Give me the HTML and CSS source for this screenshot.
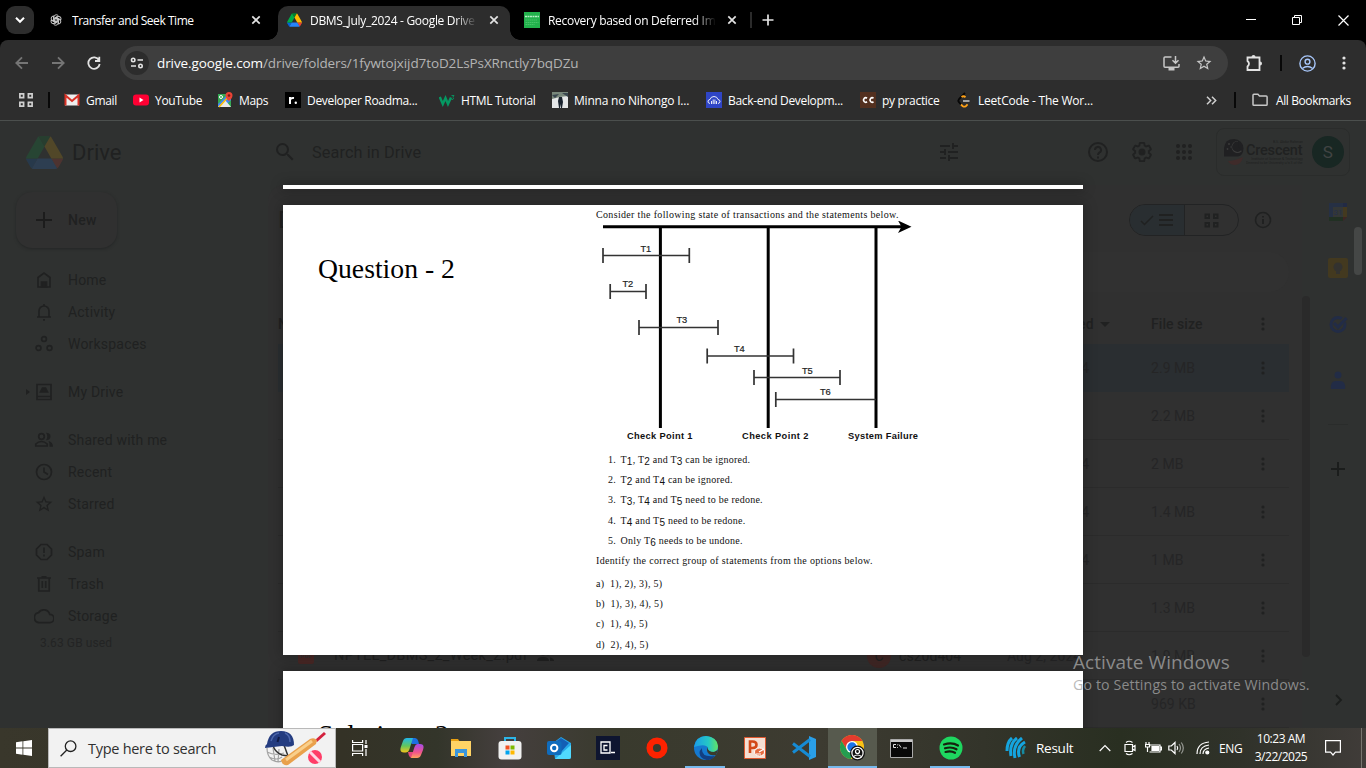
FILE: index.html
```html
<!DOCTYPE html>
<html lang="en">
<head>
<meta charset="utf-8">
<title>DBMS_July_2024 - Google Drive</title>
<link rel="stylesheet" href="styles.css">
</head>
<body>
<svg class="defs" width="0" height="0">
  <symbol id="drive" viewBox="0 0 87.3 78"><path fill="#0066da" d="m6.6 66.85 3.85 6.65c.8 1.4 1.95 2.5 3.3 3.3l13.75-23.8h-27.5c0 1.55.4 3.1 1.2 4.5z"/><path fill="#00ac47" d="m43.65 25-13.75-23.8c-1.35.8-2.5 1.9-3.3 3.3l-25.4 44a9.06 9.06 0 0 0 -1.2 4.5h27.5z"/><path fill="#ea4335" d="m73.55 76.8c1.35-.8 2.5-1.9 3.3-3.3l1.6-2.75 7.65-13.25c.8-1.4 1.2-2.95 1.2-4.5h-27.5l5.85 11.5z"/><path fill="#00832d" d="m43.65 25 13.75-23.8c-1.35-.8-2.9-1.2-4.5-1.2h-18.5c-1.6 0-3.15.45-4.5 1.2z"/><path fill="#2684fc" d="m59.8 53h-32.3l-13.75 23.8c1.35.8 2.9 1.2 4.5 1.2h50.8c1.6 0 3.15-.45 4.5-1.2z"/><path fill="#ffba00" d="m73.4 26.5-12.7-22c-.8-1.4-1.95-2.5-3.3-3.3l-13.75 23.8 16.15 28h27.45c0-1.55-.4-3.1-1.2-4.5z"/></symbol>
  <symbol id="x" viewBox="0 0 10 10"><path d="M1.3 1.3l7.4 7.4M8.7 1.3L1.3 8.7" fill="none" stroke="#e3e3e3" stroke-width="1.7"/></symbol>
  <symbol id="star" viewBox="0 0 24 24"><path d="M22 9.24l-7.19-.62L12 2 9.19 8.63 2 9.24l5.46 4.73L5.82 21 12 17.27 18.18 21l-1.63-7.03L22 9.24zM12 15.4l-3.76 2.27 1-4.28-3.32-2.88 4.38-.38L12 6.1l1.71 4.04 4.38.38-3.32 2.88 1 4.28L12 15.4z"/></symbol>
  <symbol id="dots" viewBox="0 0 4 16"><circle cx="2" cy="3" r="1.6"/><circle cx="2" cy="8" r="1.6"/><circle cx="2" cy="13" r="1.6"/></symbol>
</svg>

<header class="tabs">
  <div class="tabsearch"><svg width="10" height="8" viewBox="0 0 10 8" fill="none" stroke="#fff" stroke-width="2"><path d="M1 1.8l4 4 4-4"/></svg></div>
  <div class="tab t1">
    <svg width="12" height="12" viewBox="0 0 24 24" fill="none" stroke="#c8c8c8" stroke-width="1.900"><g id="petal"><path d="M8 13V5.500Q8.500 1.500 12.500 1.500q2.500 0 4 2L9.500 7.800V14"/></g><use href="#petal" transform="rotate(60 12 12)"/><use href="#petal" transform="rotate(120 12 12)"/><use href="#petal" transform="rotate(180 12 12)"/><use href="#petal" transform="rotate(240 12 12)"/><use href="#petal" transform="rotate(300 12 12)"/></svg>
    <span>Transfer and Seek Time</span><svg class="close" width="10" height="10"><use href="#x"/></svg>
  </div>
  <div class="tab t2">
    <svg width="15" height="14"><use href="#drive"/></svg>
    <span class="fade">DBMS_July_2024 - Google Drive</span><svg class="close" width="10" height="10"><use href="#x"/></svg>
  </div>
  <div class="tab t3">
    <svg width="16" height="16" viewBox="0 0 16 16"><path fill="#22b14c" d="M0 0h16v16H0z"/><path stroke="#b5f0c4" stroke-width="1.400" stroke-dasharray="2 .5" d="M1 4.500h14"/><path stroke="#58cb77" stroke-width=".7" stroke-dasharray="1.500 .5" d="M1.500 8h12M1.500 10.500h13M1.500 12.500h9"/></svg>
    <span class="fade">Recovery based on Deferred Imm</span><svg class="close" width="10" height="10"><use href="#x"/></svg>
  </div>
  <i class="tabdiv"></i>
  <svg class="newtab" width="12" height="12" viewBox="0 0 12 12" stroke="#e3e3e3" stroke-width="1.7"><path d="M6 .5v11M.5 6h11"/></svg>
  <div class="winctl">
    <svg width="10" height="10" viewBox="0 0 10 10" stroke="#fff" fill="none"><path d="M0 4.500h10"/></svg>
    <svg width="10" height="10" viewBox="0 0 10 10" stroke="#fff" fill="none"><path d="M.5 2.500h7v7h-7zM2.500 2.500v-2h7v7h-2"/></svg>
    <svg width="11" height="11" viewBox="0 0 11 11" stroke="#fff" fill="none" stroke-width="1.2"><path d="M.5 .5l10 10M10.500 .5l-10 10"/></svg>
  </div>
</header>

<div class="toolbar">
  <svg class="nav dim" width="14" height="14" viewBox="0 0 14 14"><path d="M13 7H1.500M7 1.300L1.300 7 7 12.700"/></svg>
  <svg class="nav dim" width="14" height="14" viewBox="0 0 14 14"><path d="M1 7h11.500M7 1.300L12.700 7 7 12.700"/></svg>
  <svg class="nav" width="14" height="14" viewBox="0 0 14 14"><path d="M12 4.200A5.700 5.700 0 1 0 12.700 8M12.300 .8v4.200H8"/></svg>
  <div class="omni">
    <div class="site"><svg width="14" height="12" viewBox="0 0 14 12" fill="none" stroke="#e3e3e3" stroke-width="1.600"><circle cx="3.200" cy="3" r="1.700"/><path d="M7.500 3H13M1 9h5"/><circle cx="10.500" cy="9" r="1.700"/></svg></div>
    <p class="url"><b>drive.google.com</b>/drive/folders/1fywtojxijd7toD2LsPsXRnctly7bqDZu</p>
    <svg class="inst" width="17" height="15" viewBox="0 0 17 15" fill="none" stroke="#c7c7c7" stroke-width="1.500"><path d="M8.500 1H2a1 1 0 0 0-1 1v8.200a1 1 0 0 0 1 1h13a1 1 0 0 0 1-1V8M12.500 0v7M9.500 4.300l3 3 3-3"/><path d="M5.500 13h6" stroke-width="3"/></svg>
    <svg width="18" height="18" fill="#c7c7c7"><use href="#star"/></svg>
  </div>
  <svg class="ext" width="17" height="17" viewBox="0 0 17 17" fill="none" stroke="#e3e3e3" stroke-width="1.800"><path d="M1.500 2.500h12v12.500h-12V11.500q3-3 0-5.500z"/><path fill="#e3e3e3" stroke="none" d="M5.500 2a2 2 0 0 1 4 0M14 6.500a2 2 0 0 1 0 4"/></svg>
  <i class="vd"></i>
  <svg class="prof" width="17" height="17" viewBox="0 0 17 17" fill="none" stroke="#a8c7fa" stroke-width="1.400"><circle cx="8.500" cy="8.500" r="7.600"/><circle cx="8.500" cy="6.700" r="2.400"/><path d="M3.300 13.500q5.200-4 10.400 0"/></svg>
  <svg class="more" width="4" height="16" fill="#e3e3e3"><use href="#dots"/></svg>
</div>

<nav class="bookmarks">
  <svg class="apps" width="14" height="14" viewBox="0 0 14 14" fill="none" stroke="#d0d0d0" stroke-width="1.700"><path d="M.9 .9h3.700v3.700H.9zM9.400 .9h3.700v3.700H9.400zM.9 9.400h3.700v3.700H.9zM9.400 9.400h3.700v3.700H9.400z"/></svg>
  <i class="vd"></i>
  <div class="marks">
    <a><svg width="16" height="16" viewBox="0 0 16 16"><path fill="#eee" d="M1 2.500h14v11H1z"/><path fill="none" stroke="#d93025" stroke-width="2" d="M1.500 13.500V3.500L8 9l6.500-5.500v10"/></svg>Gmail</a>
    <a><svg width="16" height="16" viewBox="0 0 16 16"><rect y="2.500" width="16" height="11" rx="3" fill="#ff0033"/><path fill="#fff" d="M6.500 5.500v5l4-2.500z"/></svg>YouTube</a>
    <a><svg width="16" height="16" viewBox="0 0 16 16"><path fill="#34a853" d="M1 2h13v13H1z"/><path fill="#4285f4" d="M1 12L10 3l4 0v5l-7 7H1z"/><path fill="#e8e8e8" d="M1 15l7-7 6 7H1z"/><path stroke="#fbbc04" stroke-width="1.600" d="M2 15L13 3"/><path fill="#ea4335" d="M12 0a3.500 3.500 0 0 1 3.500 3.500Q15.500 6 12 9 8.500 6 8.500 3.500A3.500 3.500 0 0 1 12 0z"/><circle cx="12" cy="3.500" r="1.300" fill="#7c1a12"/><circle cx="4" cy="5" r="1.500" fill="none" stroke="#fff"/></svg>Maps</a>
    <a><svg width="16" height="16" viewBox="0 0 16 16"><path d="M0 0h16v16H0z"/><path fill="none" stroke="#fff" stroke-width="2" d="M5 12V5M5 8q.5-2.500 4-2"/><circle cx="10.800" cy="10.800" r="1.200" fill="#fff"/></svg>Developer Roadma...</a>
    <a><svg width="16" height="16" viewBox="0 0 16 16" fill="none" stroke="#059862"><path stroke-width="2.400" d="M.8 5l3 7 2.700-6 2.500 6L12 5.500"/><path d="M12.500 3.500h2.500l-1.200 1.800q1.700.5 0 2.200h-1.300" stroke-width=".9"/></svg>HTML Tutorial</a>
    <a><svg width="16" height="16" viewBox="0 0 16 16"><path fill="#e5e7e8" d="M0 0h16v16H0z"/><path fill="#78877b" d="M0 0h16v4L8 5 0 7z"/><path fill="#39464f" d="M0 3l7-1-4 4zM10 1h6v4z"/><path fill="#18222d" d="M7 5h3l1 5-1 6H9l-.5-4L8 16H7L6 9z"/></svg>Minna no Nihongo I...</a>
    <a><svg width="16" height="16" viewBox="0 0 16 16"><path fill="#2f45c5" d="M0 0h16v16H0z"/><path fill="none" stroke="#fff" stroke-width=".9" d="M4 11.500q-2.500-.5-2-2.500.5-1.500 2-1.500.8-3 4-3t4 3q2.200.3 2 2.200-.2 1.500-2 1.800M5.500 12V9M7.200 12V7.500M8.900 12V7.500M10.500 12V9"/></svg>Back-end Developm...</a>
    <a><svg width="16" height="16" viewBox="0 0 16 16"><path fill="#53301f" d="M0 0h16v16H0z"/><path fill="none" stroke="#fff" stroke-width="1.700" d="M7 6.200A2.200 2.200 0 1 0 7 9.800M13.500 6.200a2.200 2.200 0 1 0 0 3.600"/></svg>py practice</a>
    <a><svg width="16" height="16" viewBox="0 0 16 16" fill="none" stroke-width="1.800"><path stroke="#070707" d="M9 1L3 7.200q-1.300 1.500 0 3L5 12.500"/><path stroke="#ffa116" d="M5.500 5q2-1.500 4 .2M5 12.500l1.800 1.700q1.500 1 3 0l1.800-1.800"/><path stroke="#b3b3b3" d="M7 9h6.500"/></svg>LeetCode - The Wor...</a>
  </div>
  <svg class="chev" width="11" height="9" viewBox="0 0 11 9" fill="none" stroke="#d0d0d0" stroke-width="1.500"><path d="M1 .8L4.700 4.500 1 8.200M6 .8l3.700 3.700L6 8.200"/></svg>
  <i class="vd"></i>
  <svg class="folder" width="16" height="14" viewBox="0 0 16 14" fill="none" stroke="#c7c7c7" stroke-width="1.500"><path d="M1 11.500V2.200q0-.9.900-.9h4l1.600 1.800h6.700q.9 0 .9.900v7.500q0 .8-.9.800H1.900q-.9 0-.9-.8z"/></svg>
  <span class="allb">All Bookmarks</span>
</nav>

<main class="page">
  <div class="apphead">
    <svg class="logo" width="37" height="33"><use href="#drive"/></svg><span class="brand">Drive</span>
    <div class="search">
      <svg width="24" height="24" viewBox="0 0 24 24"><path d="M15.5 14h-.79l-.28-.27A6.471 6.471 0 0 0 16 9.500 6.500 6.500 0 1 0 9.500 16c1.610 0 3.090-.59 4.230-1.570l.27.28v.79l5 4.990L20.490 19l-4.990-5zm-6 0C7.010 14 5 11.990 5 9.500S7.010 5 9.500 5 14 7.010 14 9.500 11.990 14 9.500 14z"/></svg>
      <span>Search in Drive</span>
      <svg width="24" height="24" viewBox="0 0 24 24"><path d="M3 17v2h6v-2H3zM3 5v2h10V5H3zm10 16v-2h8v-2h-8v-2h-2v6h2zM7 9v2H3v2h4v2h2V9H7zm14 4v-2H11v2h10zm-6-4h2V7h4V5h-4V3h-2v6z"/></svg>
    </div>
    <div class="headicons">
      <svg width="24" height="24" viewBox="0 0 24 24" class="ln"><circle cx="12" cy="12" r="9"/><path d="M9 10a3 3 0 1 1 4.500 2.500Q12 13.300 12 15M12 16.500v2"/></svg>
      <svg width="24" height="24" viewBox="0 0 24 24" class="ln"><path d="M19.430 12.980c.04-.32.07-.64.07-.98 0-.34-.03-.66-.07-.98l2.110-1.650c.19-.15.24-.42.12-.64l-2-3.460a.5.5 0 0 0-.61-.22l-2.490 1c-.52-.4-1.080-.73-1.690-.98l-.38-2.650A.49.49 0 0 0 14 2h-4c-.25 0-.46.18-.49.42l-.38 2.650c-.61.25-1.170.59-1.690.98l-2.490-1a.5.5 0 0 0-.61.22l-2 3.460c-.13.22-.07.49.12.64l2.110 1.650c-.04.32-.07.65-.07.98 0 .33.03.66.07.98l-2.110 1.650c-.19.15-.24.42-.12.64l2 3.460c.12.22.39.3.61.22l2.490-1c.52.4 1.080.73 1.690.98l.38 2.650c.03.24.24.42.49.42h4c.25 0 .46-.18.49-.42l.38-2.650c.61-.25 1.170-.59 1.690-.98l2.490 1c.23.09.49 0 .61-.22l2-3.460c.12-.22.07-.49-.12-.64z" transform="translate(1 1) scale(.917)"/><circle cx="12" cy="12" r="2.500" fill="#202121"/></svg>
      <svg width="24" height="24" viewBox="0 0 24 24"><circle cx="6" cy="6" r="2"/><circle cx="12" cy="6" r="2"/><circle cx="18" cy="6" r="2"/><circle cx="6" cy="12" r="2"/><circle cx="12" cy="12" r="2"/><circle cx="18" cy="12" r="2"/><circle cx="6" cy="18" r="2"/><circle cx="12" cy="18" r="2"/><circle cx="18" cy="18" r="2"/></svg>
    </div>
    <div class="org">
      <svg width="20" height="28" viewBox="0 0 20 28"><path fill="#202022" d="M10 1a9.500 9.500 0 0 1 9.500 9.500Q19 18 14 18.500H0V10Q1 1 10 1z"/><path fill="#3a3a3a" d="M14 3a6 6 0 1 0 4 10 7 7 0 0 1-4-10z"/><path fill="#202022" d="M15 4a5 5 0 1 0 2 8 6 6 0 0 1-2-8z"/><g fill="#3a3a3a"><circle cx="5" cy="6" r="1"/><circle cx="3.500" cy="11" r=".9"/><circle cx="7" cy="9" r=".7"/></g><path fill="#3f2b2a" d="M4 23q6 0 15-4-2 8-8 8-5 0-7-4z"/></svg>
      <div class="orgname"><small>B.S. Abdur Rahman</small><strong>Crescent</strong><small>Institute of Science &amp; Technology</small><small>Deemed to be University u/s 3 of the UGC</small></div>
      <div class="avatar">S</div>
    </div>
  </div>

  <div class="body">
    <aside class="side">
      <div class="new"><svg width="24" height="24" viewBox="0 0 24 24" stroke="#1c1c1c" stroke-width="2"><path d="M12 4v16M4 12h16"/></svg>New</div>
      <ul>
        <li><svg viewBox="0 0 20 20"><path d="M4 17V7.500L10 3l6 4.500V17z"/><path d="M7.500 17v-5h5v5z" fill="#202121"/></svg>Home</li>
        <li><svg viewBox="0 0 20 20"><path d="M3 15h14M5 15V9a5 5 0 0 1 10 0v6M10 2v2M9 17.800h2"/></svg>Activity</li>
        <li><svg viewBox="0 0 20 20"><circle cx="10" cy="5" r="2.400"/><circle cx="4.500" cy="14" r="2.400"/><circle cx="15.500" cy="14" r="2.400"/></svg>Workspaces</li>
        <li class="gap mydrive"><svg viewBox="0 0 20 20"><path d="M3 2.500h14v15H3zM3 14.500h14"/><path d="M8.500 6h3l2 4h-7z" fill="#202121"/></svg>My Drive</li>
        <li class="gap"><svg viewBox="0 0 20 20"><circle cx="7.500" cy="6.500" r="2.800"/><path d="M1.800 16v-2q2.500-2.500 5.700-2.500t5.700 2.500v2z"/><path fill="#202121" stroke="none" d="M12 2.800q4.500 0 4.500 3.700T12 10.200q2.500-3.700 0-7.400zM14.500 11q4.500 1 4.500 5.800h-3.500q.5-4-1-5.800z"/></svg>Shared with me</li>
        <li><svg viewBox="0 0 20 20"><circle cx="10" cy="10" r="7.500"/><path d="M10 5.500V10l4 2.500"/></svg>Recent</li>
        <li><svg viewBox="0 0 24 24" class="solid"><use href="#star"/></svg>Starred</li>
        <li class="gap"><svg viewBox="0 0 20 20"><path d="M7 2.500h6L17.500 7v6L13 17.500H7L2.500 13V7z"/><path d="M10 5.500V11M10 12.500v2"/></svg>Spam</li>
        <li><svg viewBox="0 0 20 20"><path d="M3 4h14M7.500 2.800h5M4.800 4v13h10.400V4M8.300 7v7M11.700 7v7"/></svg>Trash</li>
        <li><svg viewBox="0 0 20 20"><path d="M15.700 8.300A6.200 6.200 0 0 0 4.500 6.700 5 5 0 0 0 5 16.600h10.800a4.100 4.100 0 0 0-.1-8.300z"/></svg>Storage</li>
      </ul>
      <p class="used">3.63 GB used</p>
    </aside>

    <section class="files">
      <div class="crumb"><h1>DBMS_July_2024</h1>
        <div class="toggle"><span class="on"><svg width="36" height="14" viewBox="0 0 36 14" class="ln"><path d="M2 8l3.500 3.500L14 3" stroke-width="1.500"/><path d="M20 2h14M20 7h14M20 12h14"/></svg></span><span><svg width="15" height="15" viewBox="0 0 15 15" class="ln"><path d="M1.500 1.500h3.500v3.500h-3.500zM10 1.500h3.500v3.500h-3.500zM1.500 10h3.500v3.500h-3.500zM10 10h3.500v3.500h-3.500z"/></svg></span></div>
        <svg width="20" height="20" viewBox="0 0 20 20" class="ln info"><circle cx="10" cy="10" r="7.500" stroke-width="1.600"/><path d="M10 9v5M10 6v1.600"/></svg>
      </div>
      <div class="chips"></div>
      <div class="row th"><span class="nm">Name</span><span>Owner</span><span>Last modified <i class="caret"></i></span><span>File size</span><svg width="4" height="16"><use href="#dots"/></svg></div>
      <div class="row sel"><span></span><span></span><span>Aug 10, 2024</span><span>2.9 MB</span><svg width="4" height="16"><use href="#dots"/></svg></div>
      <div class="row"><span></span><span></span><span>Aug 2, 2024</span><span>2.2 MB</span><svg width="4" height="16"><use href="#dots"/></svg></div>
      <div class="row"><span></span><span></span><span>Aug 20, 2024</span><span>2 MB</span><svg width="4" height="16"><use href="#dots"/></svg></div>
      <div class="row"><span></span><span></span><span>Aug 28, 2024</span><span>1.4 MB</span><svg width="4" height="16"><use href="#dots"/></svg></div>
      <div class="row"><span></span><span></span><span>Aug 14, 2024</span><span>1 MB</span><svg width="4" height="16"><use href="#dots"/></svg></div>
      <div class="row"><span></span><span></span><span>Aug 2, 2024</span><span>1.3 MB</span><svg width="4" height="16"><use href="#dots"/></svg></div>
      <div class="row"><span class="file"><em>PDF</em>NPTEL_DBMS_2_Week_2.pdf<svg width="17" height="12" viewBox="0 0 17 12"><circle cx="6" cy="3" r="2.800"/><circle cx="11" cy="3" r="2.500"/><path d="M0 11q0-4 6-4t6 4zM13 7.500q4 .5 4 3.500h-4z"/></svg></span><span class="owner"><em>C</em>cs20d404</span><span>Aug 2, 2024</span><span>1.9 MB</span><svg width="4" height="16"><use href="#dots"/></svg></div>
      <div class="row"><span></span><span></span><span>Aug 2, 2024</span><span>969 KB</span><svg width="4" height="16"><use href="#dots"/></svg></div>
    </section>
    <div class="listbar"></div>

    <aside class="panel">
      <svg width="20" height="20" viewBox="0 0 20 20"><path fill="#263044" d="M1 1h14v4H5v10H1z"/><path fill="#213023" d="M1 15h14v4H1z"/><path fill="#43391f" d="M15 5h4v10h-4z"/><path fill="#222a44" d="M15 1h4v4h-4z"/><path fill="#343736" d="M5 5h10v10H5z"/><path fill="#402523" d="M15 15h4l-4 4z"/><text x="5.500" y="13" font-size="8" letter-spacing="0" fill="#26304a">31</text></svg>
      <svg width="20" height="20" viewBox="0 0 20 20"><rect width="20" height="20" rx="2" fill="#43391f"/><circle cx="10" cy="9" r="4.500" fill="#33322f"/><path fill="#33322f" d="M8 12h4v4H8z"/></svg>
      <svg width="20" height="20" viewBox="0 0 20 20" fill="none" stroke="#222c46" stroke-width="3"><circle cx="10" cy="10.500" r="7"/><path stroke="#2f3130" stroke-width="5" d="M9 13l9-9"/><path d="M6 9l4 4 8.500-9"/></svg>
      <svg width="20" height="20" viewBox="0 0 20 20" fill="#222c46"><circle cx="10" cy="5" r="3.500"/><path d="M3 19q-1-8 5-8h4q6 0 5 8z"/></svg>
      <hr>
      <svg width="20" height="20" viewBox="0 0 20 20" stroke="#1b1d1c" stroke-width="2"><path d="M10 3v14M3 10h14"/></svg>
      <svg class="end" width="20" height="20" viewBox="0 0 20 20"><path fill="none" stroke="#1b1d1c" stroke-width="1.800" d="M8 5l5 5-5 5"/></svg>
    </aside>
  </div>

  <div class="viewer">
    <article class="sheet prev"></article>
    <article class="sheet">
      <h2>Question - 2</h2>
      <div class="q">
        <p class="lead">Consider the following state of transactions and the statements below.</p>
        <svg class="diagram" width="330" height="222" viewBox="596 221 330 222">
          <g fill="none" stroke="#000" stroke-width="3"><path d="M603 226.700h300M660.400 226v202M768.200 226v202M876 226v202"/></g>
          <path d="M898 220.500l13.500 6.300-13.500 6.300 3.500-6.300z" fill="#000"/>
          <g fill="none" stroke="#333" stroke-width="1.700"><path d="M603 255.500h86M603 248v15M689.300 248v15M610.200 291.500h36M610.200 284v15M646 284v15M639 327.500h79M639 320v15M718 320v15M707.200 356h86M707.200 348.500v15M793.500 348.500v15M754 377.500h86M754 370v15M840 370v15M775.800 399.500h100M775.800 392v15"/></g>
          <g class="tl"><text x="640.500" y="252">T1</text><text x="622.500" y="287">T2</text><text x="676.500" y="323">T3</text><text x="734" y="351.700">T4</text><text x="802" y="373.500">T5</text><text x="820" y="395">T6</text></g>
          <g class="cl"><text x="627" y="438.700" textLength="65.500">Check Point 1</text><text x="742" y="438.700" textLength="66.500">Check Point 2</text><text x="848" y="438.700" textLength="70">System Failure</text></g>
        </svg>
        <ol>
          <li>T<sub>1</sub>, T<sub>2</sub> and T<sub>3</sub> can be ignored.</li>
          <li>T<sub>2</sub> and T<sub>4</sub> can be ignored.</li>
          <li>T<sub>3</sub>, T<sub>4</sub> and T<sub>5</sub> need to be redone.</li>
          <li>T<sub>4</sub> and T<sub>5</sub> need to be redone.</li>
          <li>Only T<sub>6</sub> needs to be undone.</li>
        </ol>
        <p class="ident">Identify the correct group of statements from the options below.</p>
        <p class="opt">a)&nbsp; 1), 2), 3), 5)</p><p class="opt">b)&nbsp; 1), 3), 4), 5)</p><p class="opt">c)&nbsp; 1), 4), 5)</p><p class="opt">d)&nbsp; 2), 4), 5)</p>
      </div>
    </article>
    <article class="sheet next"><h2>Solution - 2</h2></article>
  </div>
  <div class="pagebar"></div>
  <div class="activate"><p>Activate Windows</p><span>Go to Settings to activate Windows.</span></div>
</main>

<footer class="taskbar">
  <div class="start"><svg width="16" height="16" viewBox="0 0 16 16" fill="#fff"><path d="M0 2.200L6.500 1.300V7.600H0zM7.300 1.200L16 0v7.600H7.300zM0 8.400h6.500v6.300L0 13.800zM7.300 8.400H16V16l-8.700-1.200z"/></svg></div>
  <div class="find">
    <svg width="17" height="17" viewBox="0 0 17 17" fill="none" stroke="#222" stroke-width="1.300"><circle cx="10.600" cy="6.200" r="5.300"/><path d="M6.800 10L.6 16.200"/></svg>
    <span>Type here to search</span>
    <svg width="62" height="38" viewBox="0 0 62 38"><path d="M3 19q0 8 5 12 8 4 12-1M3 23q8 4 17 1M5 28q8 4 13 0M9 19l2 13M15 20l-1 13" fill="none" stroke="#a3a3a3" stroke-width="1.200"/><path d="M9 17q3 7 9 9l6 1-4-11" fill="none" stroke="#333" stroke-width="1.500"/><path fill="#243c80" d="M3 15Q5 2 17 2q13 0 13 14-3 3-12 1L1 19q0-3 2-4z"/><path fill="none" d="M7 12Q9 5 15 4M21 4q5 2 5 9" stroke="#4c66aa" stroke-width="1.500"/><path d="M15 8l-1.500 5" stroke="#101b45" stroke-width="2"/><path stroke="#d3213e" stroke-width="3" d="M52 12L61 4"/><path fill="#e9a14c" d="M17 31L46 10q4-2 7 1l-1 4-28 21q-6 1-7-5z"/><path stroke="#f9cf8b" stroke-width="3" d="M22 31L48 12"/><circle cx="51" cy="28" r="7" fill="#ff3d68"/><path stroke="#ffd7e5" stroke-width="3" d="M46 23l10 10"/></svg>
  </div>
  <div class="tv"><svg width="16" height="16" viewBox="0 0 16 16" fill="none" stroke="#fff" stroke-width="1.200"><path d="M.6 0v2.500h10V0M.6 4.500h10v6.500H.6zM.6 16v-2.500h10V16M14 0v4M14 9v7"/><path fill="#fff" stroke="none" d="M12.500 5h3v3h-3z"/></svg></div>
  <div class="slot"><svg width="24" height="22" viewBox="0 0 24 22"><defs><linearGradient id="c1" x1="0" y1="0" x2="0" y2="1"><stop stop-color="#20b8ec"/><stop offset=".55" stop-color="#62c65b"/><stop offset="1" stop-color="#f5c51a"/></linearGradient><linearGradient id="c2" x1="0" y1="0" x2="0" y2="1"><stop stop-color="#a64bea"/><stop offset=".6" stop-color="#f0558a"/><stop offset="1" stop-color="#ffa35c"/></linearGradient></defs><path fill="#1c6fe0" d="M6 1h9q3 0 4 6h-7z"/><path fill="url(#c1)" d="M7 1h6L9.500 12q-1 3.500-4 3.500H4q-5 0-3-6L3 4q1-3 4-3z"/><path fill="#e4477c" d="M8 15h7l-3 6q-3 0-4-6z"/><path fill="url(#c2)" d="M17.500 7H20q5 0 3 6l-2 5q-1 3-4 3h-6l3.500-11q1-3 3-3z"/></svg></div>
  <div class="slot"><svg width="22" height="20" viewBox="0 0 22 20"><path fill="#e8a012" d="M1 1h7l2 3H1z"/><path fill="#ffd365" d="M1 3h20v15H1z"/><path fill="#3a96dd" d="M5 11h12v8h-3v-4H8v4H5z"/></svg></div>
  <div class="slot"><svg width="24" height="24" viewBox="0 0 24 24"><path fill="none" stroke="#2cb5e8" stroke-width="2" d="M7 6V2h10v4"/><rect x=".5" y="5" width="23" height="18.500" rx="3" fill="#f1f1f1"/><path fill="#f25022" d="M7.500 9.500h4v4h-4z"/><path fill="#7fba00" d="M12.500 9.500h4v4h-4z"/><path fill="#00a4ef" d="M7.500 14.500h4v4h-4z"/><path fill="#ffb900" d="M12.500 14.500h4v4h-4z"/></svg></div>
  <div class="slot"><svg width="24" height="24" viewBox="0 0 24 24"><path fill="#27a9ea" d="M6 7l8-6 10 6v14q0 2-2 2H8z"/><path fill="#145fb5" d="M8 6l6-4 8 5-8 9z"/><path fill="#50d9ff" d="M24 9v12q0 2-2 2H8z"/><rect y="5" width="14.500" height="14" rx="2" fill="#0f6cbd"/><circle cx="7.200" cy="12" r="3.200" fill="none" stroke="#fff" stroke-width="2"/></svg></div>
  <div class="slot"><svg width="24" height="24" viewBox="0 0 24 24"><path fill="#0e1530" d="M0 0h24v24H0z"/><path fill="none" stroke="#fff" stroke-width="1.300" d="M5 6h9v11H5zM11.500 9.500H8v4.500h3.500M15 16.500h4"/></svg></div>
  <div class="slot"><svg width="22" height="22"><circle cx="11" cy="11" r="7.300" fill="none" stroke="#ff2200" stroke-width="6.500"/></svg></div>
  <div class="slot run"><svg width="24" height="24" viewBox="0 0 24 24"><defs><linearGradient id="e"><stop stop-color="#1a9ce8"/><stop offset=".6" stop-color="#25c8c5"/><stop offset="1" stop-color="#63e463"/></linearGradient></defs><circle cx="12" cy="12" r="12" fill="#1579cf"/><path fill="url(#e)" d="M0 11Q2 0 12 0q11 1 12 10 0 6-6 6-5 0-4-4Q12 7 0 11z"/><path fill="#123f82" d="M8 12q-1 10 13 8-6 7-13 2-5-5 0-10z"/><path fill="#3a3b2b" d="M13 11q1 5 7 5l4-2-2 5q-10 2-9-8z"/></svg></div>
  <div class="slot"><svg width="22" height="22" viewBox="0 0 22 22"><path fill="#f5ded2" stroke="#df582f" d="M.5 .5h21v21H.5z"/><path fill="none" stroke="#d34817" stroke-width="2.600" d="M6 16V4.500h2.500q4 0 4 3.200T8.500 11H6"/><ellipse cx="15.500" cy="15" rx="5" ry="4" fill="#e56b40" stroke="#fff"/><path stroke="#fff" stroke-width="1.200" d="M15 15l5-3M12 17h5"/></svg></div>
  <div class="slot"><svg width="24" height="24" viewBox="0 0 24 24"><path fill="#2a9fe8" d="M17 0l7 3v18l-7 3z"/><path fill="none" stroke="#168bd5" stroke-width="3" d="M1 7.500L18 20.500M1 16.500L18 3.500"/></svg></div>
  <div class="slot chrome"><svg width="28" height="26" viewBox="0 0 28 26"><circle cx="13" cy="12" r="12" fill="#fbc116"/><path fill="#e33b2e" d="M2.600 6A12 12 0 0 1 23.400 6H13l-5 9z"/><path fill="#259d50" d="M2.600 6a12 12 0 0 0 9 18L17 15H8z"/><circle cx="13" cy="12" r="6" fill="#fff"/><circle cx="13" cy="12" r="4.700" fill="#1a73e8"/><circle cx="18.500" cy="18" r="7.500" fill="#111"/><g fill="none" stroke="#fff" stroke-width="1.200"><circle cx="18.500" cy="18" r="5.600"/><circle cx="18.500" cy="16.500" r="2"/><path d="M14.500 21.500q4-3 8 0"/></g></svg></div>
  <div class="slot"><svg width="23" height="19" viewBox="0 0 23 19"><path fill="#080808" stroke="#aaa" d="M.5 .5h22v18H.5z"/><path fill="#c7c7c7" d="M1 1h21v2H1z"/><path fill="none" stroke="#ddd" d="M6 5.500H3.500v3H6M7.500 5.500v.8M7.500 8v.8M9 5.500l2 3M13 9h4"/></svg></div>
  <div class="slot run"><svg width="24" height="24" viewBox="0 0 24 24"><circle cx="12" cy="12" r="11.500" fill="#1ed760"/><path fill="none" stroke="#15220f" stroke-linecap="round" stroke-width="2.200" d="M5 8.500q8-2.500 14 1M6 12.300q6.500-2 11.500 1M6.500 16q5.500-1.500 9.500.8"/></svg></div>
  <div class="tray">
    <svg width="22" height="22" viewBox="0 0 22 22"><g fill="none" stroke="#15a5df" stroke-width="3"><path d="M2 14Q2 5 7 1M6 19Q4 7 12 1M10 21Q7 9 17 1M14.500 20Q11 10 20 5"/></g><path stroke="#168ca3" stroke-width="2.500" d="M18.500 17Q17 13 20 9" fill="none"/></svg>
    <span class="result">Result</span>
    <svg class="up" width="12" height="8" viewBox="0 0 12 8"><path d="M.7 7L6 1.700 11.300 7"/></svg>
    <svg class="cam" width="12" height="16" viewBox="0 0 12 16"><path d="M1 4.500h7.500v7H1zM8.500 7l2.500-1.500v5L8.500 9M2 2.500Q5 0 8.500 2.500M2 13.500Q5 16 8.500 13.500"/></svg>
    <svg class="bat" width="17" height="14" viewBox="0 0 17 14"><path d="M5 4h10v7H4.500M15 6h1.400v3H15M1 1v2M4 1v2M.5 3.500h4v2.500h-4zM2.500 6v5"/><path d="M7 5.500h6.500v4H7z" fill="#fff"/></svg>
    <svg class="vol" width="17" height="14" viewBox="0 0 17 14"><path d="M.8 5h2.500L7 1.500v11L3.300 9H.8zM9 5q1.500 2 0 4"/><path d="M11 3q3 4 0 8M13.300 1.500q4 5.500 0 11" opacity=".5"/></svg>
    <svg class="wifi" width="14" height="14" viewBox="0 0 14 14"><path d="M1 13Q1 2 13 1M4 13Q4 5 13 4M7 13Q7 8 13 7"/><circle cx="11.300" cy="11.500" r="1.500" fill="#fff"/></svg>
    <span class="eng">ENG</span>
    <div class="clock"><span>10:23 AM</span><span>3/22/2025</span></div>
    <svg class="note" width="16" height="16" viewBox="0 0 16 16"><path d="M.6 .6h14.800v11.500h-5L8 15l-2.500-2.900H.6z"/></svg>
    <i class="peek"></i>
  </div>
</footer>
</body>
</html>
```

FILE: styles.css
```css
* { box-sizing: border-box; }
body { margin: 0; width: 1366px; height: 768px; overflow: hidden; display: flex; flex-direction: column; background: #000; color: #fff; font: 12px "Open Sans", "Noto Sans", sans-serif; }
p, h1, h2, ul, ol { margin: 0; padding: 0; }
svg { flex: none; display: block; }
.defs { position: absolute; }

/* tab strip */
.tabs { height: 40px; flex: none; display: flex; align-items: center; letter-spacing: -.3px; }
.tabsearch { width: 28px; height: 28px; margin-left: 6px; border-radius: 9px; background: #2d2d2d; display: grid; place-items: center; }
.tab { height: 34px; margin-top: 6px; display: flex; align-items: center; padding-bottom: 6px; white-space: nowrap; }
.tab span { overflow: hidden; }
.tab .close { margin-left: auto; }
.t1 { width: 227px; margin-left: 16px; }
.t1 span { margin-left: 10px; letter-spacing: -.45px; }
.t1 .close { margin-right: 16px; }
.t2 { position: relative; width: 232px; margin-left: 1px; border-radius: 10px 10px 0 0; background: #2d2d2d; padding-left: 9px; }
.t2 span { width: 167px; margin-left: 8px; }
.t2 .close { margin-right: 11px; }
.t2::before, .t2::after { content: ""; position: absolute; bottom: 0; width: 10px; height: 10px; }
.t2::before { left: -10px; background: radial-gradient(circle at 0 0, #000 9.5px, #2d2d2d 10px); }
.t2::after { right: -10px; background: radial-gradient(circle at 100% 0, #000 9.5px, #2d2d2d 10px); }
.t3 { width: 226px; margin-left: 14px; }
.t3 span { width: 168px; margin-left: 8px; }
.t3 .close { margin-right: 0; margin-left: 11px; }
.fade { -webkit-mask-image: linear-gradient(90deg, #000 87%, transparent); mask-image: linear-gradient(90deg, #000 87%, transparent); }
.tabdiv { width: 2px; height: 16px; background: #2b2b2b; }
.newtab { margin-left: 10px; }
.winctl { margin-left: auto; margin-right: 17px; display: flex; align-items: center; gap: 36px; }

/* toolbar */
.toolbar { height: 46px; flex: none; display: flex; align-items: center; background: #2d2d2d; border-radius: 8px 8px 0 0; padding-left: 15px; }
.nav { fill: none; stroke: #e3e3e3; stroke-width: 1.8; margin-right: 22px; }
.nav.dim { stroke: #757575; }
.omni { width: 1108px; height: 34px; flex: none; margin-left: -3px; border-radius: 17px; background: #3e3e3e; display: flex; align-items: center; padding: 0 15px 0 5px; }
.site { width: 24px; height: 24px; border-radius: 12px; background: #2c2c2c; display: grid; place-items: center; }
.url { font-size: 13.5px; color: #b4b4b4; margin-left: 8px; flex: 1; letter-spacing: -.1px; }
.url b { font-weight: 400; color: #fff; }
.inst { margin-right: 15px; }
.vd { width: 2px; height: 16px; background: #080808; flex: none; }
.ext { margin-left: 18px; }
.ext + .vd { margin-left: 17px; }
.prof { margin-left: 17px; }
.more { margin-left: 26px; }

/* bookmarks */
.bookmarks { height: 34px; flex: none; background: #2d2d2d; display: flex; align-items: center; padding: 0 0 6px 19px; letter-spacing: -.32px; white-space: nowrap; }
.apps + .vd { margin-left: 15px; }
.marks { width: 1142px; margin-left: 14px; display: grid; grid-template-columns: 69px 84px 68px 154px 113px 154px 154px 96px 160px; }
.marks a { display: flex; align-items: center; gap: 6px; }
.marks a:nth-child(6), .marks a:nth-child(9) { letter-spacing: -.22px; }
.chev { margin-right: 17px; }
.folder { margin-left: 16px; }
.allb { margin-left: 8px; letter-spacing: -.4px; }

/* dimmed Drive application */
.page { position: relative; height: 608px; flex: none; overflow: hidden; background: #2f3130; border-top: 1px solid #4b4f4d; color: #202121; fill: #202121; font-family: Roboto, sans-serif; font-size: 14px; letter-spacing: .2px; }
.ln { fill: none; stroke: #202121; stroke-width: 2; }
.apphead { height: 64px; display: flex; align-items: center; padding-bottom: 2px; }
.logo { margin-left: 26px; opacity: .16; }
.brand { font-size: 22px; margin-left: 9px; width: 201px; letter-spacing: 0; }
.search { display: flex; align-items: center; width: 703px; font-size: 16.3px; }
.search span { flex: 1; margin-left: 15px; letter-spacing: .1px; }
.search > svg:last-child { margin-right: 15px; }
.headicons { display: flex; gap: 19px; margin-left: 110px; }
.headicons svg:nth-child(2) { margin: 0 -1px 0 1px; }
.org { width: 134px; height: 48px; margin: 0 0 0 20px; border: 1px solid #2a2c2b; border-radius: 8px; display: flex; align-items: center; padding-left: 7px; }
.orgname { width: 57px; margin: 0 9px 0 2px; display: flex; flex-direction: column; align-items: flex-end; font-family: Roboto, sans-serif; letter-spacing: 0; white-space: nowrap; }
.orgname strong { font-size: 14.5px; line-height: 13px; width: 57px; font-weight: 500; letter-spacing: -.2px; }
.orgname small { font-size: 3.5px; line-height: 4px; max-width: 57px; overflow: hidden; }
.avatar { width: 32px; height: 32px; flex: none; border-radius: 16px; background: #182723; color: #414443; font-size: 17px; display: grid; place-items: center; }

.body { display: flex; height: 543px; }
.side { width: 268px; flex: none; }
.new { margin: 7px 0 0 16px; width: 101px; height: 56px; border-radius: 16px; background: #303030; box-shadow: 0 1px 3px #242626; display: flex; align-items: center; padding-left: 16px; gap: 12px; font-weight: 500; letter-spacing: .3px; }
.side ul { list-style: none; margin-top: 16px; }
.side li { height: 32px; display: flex; align-items: center; padding-left: 34px; gap: 14px; letter-spacing: .2px; }
.side li.gap { margin-top: 16px; }
.side li svg { width: 20px; height: 20px; fill: none; stroke: #202121; stroke-width: 1.7; }
.side li svg.solid { fill: #202121; stroke: none; }
.side li.mydrive { padding-left: 26px; }
.mydrive::before { content: ""; border: 3px solid transparent; border-left: 4px solid #202121; border-right: 0; margin-right: -10px; }
.used { font-size: 12px; margin: 4px 0 0 40px; color: #232424; letter-spacing: .1px; }

.files { width: 1034px; flex: none; background: #303030; border-radius: 16px 0 0 0; padding: 0 13px 0 10px; }
.crumb { display: flex; align-items: center; height: 67px; padding-top: 3px; }
.crumb h1 { flex: 1; font-size: 24px; font-weight: 400; }
.toggle { width: 110px; height: 32px; border: 1px solid #222324; border-radius: 16px; display: flex; overflow: hidden; }
.toggle span { flex: 1; display: grid; place-items: center; }
.toggle .on { background: #292e31; border-right: 1px solid #222324; }
.info { margin: 0 16px 0 14px; }
.chips { height: 40px; border-radius: 20px; background: #313131; }
.row { height: 48px; display: grid; grid-template-columns: 589px 140px 144px 110px 4px; align-items: center; border-bottom: 1px solid #2b2b2b; white-space: nowrap; letter-spacing: .05px; }
.row > :nth-child(n+3) { color: #252526; }
.row.th { height: 52px; font-weight: 500; border: 0; padding-top: 11px; }
.row.th > * { color: #202121; }
.row.sel { background: #2a2e31; border-color: #2a2e31; }
.caret { display: inline-block; border: 5px solid transparent; border-top-color: #202121; border-bottom: 0; margin-left: 3px; vertical-align: 2px; }
.row em { font-style: normal; }
.file { display: flex; align-items: center; font-size: 14.5px; letter-spacing: .3px; }
.file em { width: 16px; height: 16px; margin: 0 20px; border-radius: 2px; background: #482725; color: #303030; font: bold 6px/16px Roboto; text-align: center; }
.file svg { margin-left: 9px; }
.owner { display: flex; align-items: center; gap: 8px; }
.owner em { width: 24px; height: 24px; border-radius: 12px; background: #402725; display: grid; place-items: center; }
.listbar { width: 8px; height: 361px; margin-top: 111px; border-radius: 4px; background: #2a2a2a; }
.panel { width: 56px; display: flex; flex-direction: column; align-items: center; padding-top: 17px; gap: 36px; }
.panel hr { width: 20px; margin: -2px 0; border: 0; border-top: 1px solid #2a2c2b; }
.panel .end { margin-top: 175px; }

/* document viewer laid over the application */
.viewer { position: absolute; left: 283px; top: 64px; width: 800px; height: 543px; display: flex; flex-direction: column; gap: 16px; }
.sheet { height: 450px; flex: none; background: #fff; color: #111; box-shadow: 0 0 12px 2px rgba(0,0,0,.22); display: flex; }
.sheet.prev { height: 4px; }
.sheet h2 { font: 27.7px/32px "Liberation Serif", serif; color: #000; letter-spacing: 0; width: 278px; margin: 48px 0 0 35px; }
.q { font: 10px/20px "Liberation Serif", serif; letter-spacing: .23px; white-space: nowrap; }
.lead { line-height: 12px; margin-top: 4px; height: 1px; width: 310px; }
.lead, .ident { letter-spacing: .335px; }
.diagram { margin-top: 11px; }
.tl { font: 9.3px "Liberation Sans", sans-serif; fill: #222; stroke: #222; stroke-width: .2px; letter-spacing: -.2px; }
.cl { font: bold 9.3px "Liberation Sans", sans-serif; fill: #111; letter-spacing: 0; }
.q ol { margin: 7px 0 0 12px; list-style: none; counter-reset: item; }
.q sub { font: 10px/1 "Liberation Sans", sans-serif; vertical-align: -2px; }
.q li { height: 20.2px; line-height: 20.2px; counter-increment: item; }
.q li::before { content: counter(item) "."; display: inline-block; width: 12.5px; }
.opt { line-height: 20.2px; letter-spacing: .3px; }
.ident { margin-bottom: 3px; }
.pagebar { position: absolute; left: 1354px; top: 106px; width: 8px; height: 48px; border-radius: 4px; background: #454746; }
.activate { position: absolute; left: 1073px; top: 527px; font-family: "Open Sans", sans-serif; color: rgba(165,165,165,.78); letter-spacing: 0; white-space: nowrap; }
.activate p { font-size: 19px; line-height: 28px; letter-spacing: .05px; }
.activate span { font-size: 14.2px; line-height: 18px; display: block; letter-spacing: .12px; }

/* taskbar */
.taskbar { height: 40px; flex: none; display: flex; align-items: center; background: linear-gradient(90deg, #39372b 0, #343226 25%, #33352a 32%, #453f3e 37%, #393a2d 45%, #3d3b31 60%, #33342a 72%, #292f21 82%, #30322a 91%, #403c39 100%); }
.start, .tv { width: 48px; display: grid; place-items: center; }
.find { width: 288px; height: 40px; background: #f2f2f2; border: 1px solid #b9b9b9; display: flex; align-items: center; color: #303030; font-size: 14.5px; letter-spacing: -.28px; padding-left: 11px; }
.find span { width: 176px; margin-left: 11px; }
.tv { width: 51px; padding-right: 3px; }
.slot { width: 49px; height: 40px; display: grid; place-items: center; position: relative; }
.run::after, .chrome::after { content: ""; position: absolute; left: 4px; right: 5px; bottom: 0; height: 2px; background: #76b9ed; }
.chrome { background: #575a4e; }
.chrome::after { left: 0; right: 0; }
.tray { flex: 1; height: 40px; display: flex; align-items: center; padding-left: 30px; }
.tray > svg:not(:first-child) { fill: none; stroke: #fff; stroke-width: 1.2; }
.result { width: 54px; margin-left: 9px; font-size: 13.5px; letter-spacing: -.25px; }
.up { margin-left: 9px; }
.cam { margin-left: 13px; }
.bat { margin-left: 9px; }
.vol { margin-left: 6px; }
.wifi { margin-left: 11px; }
.eng { width: 23px; margin-left: 9px; letter-spacing: -.4px; }
.clock { width: 60px; margin-left: 9px; display: flex; flex-direction: column; text-align: center; line-height: 18px; letter-spacing: -.48px; white-space: nowrap; }
.note { margin-left: 14px; }
.peek { width: 1px; height: 40px; margin-left: 20px; background: #77756f; }
```
